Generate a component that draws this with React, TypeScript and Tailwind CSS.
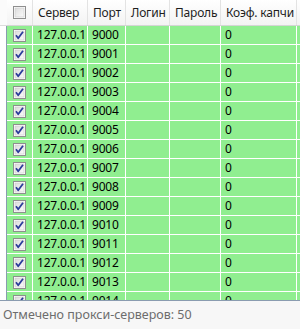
import React from 'react'

const cols = [
  { key: 'server', title: 'Сервер', w: 'w-[55px]' },
  { key: 'port', title: 'Порт', w: 'w-[38px]' },
  { key: 'login', title: 'Логин', w: 'w-[44px]' },
  { key: 'pass', title: 'Пароль', w: 'w-[51px]' },
  { key: 'k', title: 'Коэф. капчи', w: 'w-[76px]' }
]

function CheckBox({ checked }: { checked: boolean }) {
  return (
    <svg width="13" height="13" viewBox="0 0 13 13">
      <defs>
        <linearGradient id="cbg" x1="0" y1="0" x2="1" y2="1">
          <stop offset="0" stopColor="#dcdcdc" />
          <stop offset="1" stopColor="#fbfbfb" />
        </linearGradient>
      </defs>
      <rect x="0.5" y="0.5" width="12" height="12" fill="#fff" stroke="#8f8f8f" />
      <rect x="2" y="2" width="9" height="9" fill="url(#cbg)" stroke="#c9c9c9" strokeWidth="0.6" />
      {checked && (
        <path d="M3 6.3 L5.2 9.2 L10 2.8" fill="none" stroke="#2a3c9a" strokeWidth="1.8" strokeLinejoin="round" />
      )}
    </svg>
  )
}

export default function App() {
  const rows = Array.from({ length: 15 }, (_, i) => 9000 + i)

  return (
    <div className="w-[300px] h-[329px] flex flex-col bg-[#f7f7f7] text-[12px] text-black" style={{ fontFamily: '"Noto Sans", "Open Sans", sans-serif' }}>
      <div className="h-[301px] flex overflow-hidden border-b border-[#8a9cb0] bg-white tracking-[-0.2px]">
        <div className="w-[7px] shrink-0 flex flex-col">
          <div className="h-[26px] shrink-0 bg-[#fbfbfb] border-b border-[#dcdcdc]" />
          <div className="flex-1 bg-white border-r border-[#8a9cb0]" />
        </div>
        <div className="flex-1 flex flex-col">
          <div className="h-[26px] shrink-0 flex bg-gradient-to-b from-white to-[#f3f3f3] border-b border-[#d5d5d5]">
            <div className="w-[26px] shrink-0 flex items-center justify-center border-r border-[#e3e3e3]">
              <CheckBox checked={false} />
            </div>
            {cols.map(c => (
              <div key={c.key} className={`${c.w} shrink-0 flex items-center pl-[5px] border-r border-[#e3e3e3] whitespace-nowrap text-[#1e1e1e]`}>
                {c.title}
              </div>
            ))}
            <div className="flex-1" />
          </div>
          {rows.map(port => (
            <div key={port} className="h-[19px] shrink-0 flex bg-[#90ee90] border-b border-white">
              <div className="w-[26px] shrink-0 flex items-center justify-center border-r border-white">
                <CheckBox checked />
              </div>
              <div className="w-[55px] shrink-0 flex items-center pl-[4px] border-r border-white">127.0.0.1</div>
              <div className="w-[38px] shrink-0 flex items-center pl-[4px] border-r border-white">{port}</div>
              <div className="w-[44px] shrink-0 border-r border-white" />
              <div className="w-[51px] shrink-0 border-r border-white" />
              <div className="w-[76px] shrink-0 flex items-center pl-[4px] border-r border-white">0</div>
              <div className="flex-1" />
            </div>
          ))}
        </div>
      </div>
      <div className="flex-1 flex items-center pl-[3px] text-[12.5px] text-[#6d6d6d]">Отмечено прокси-серверов: 50</div>
    </div>
  )
}
